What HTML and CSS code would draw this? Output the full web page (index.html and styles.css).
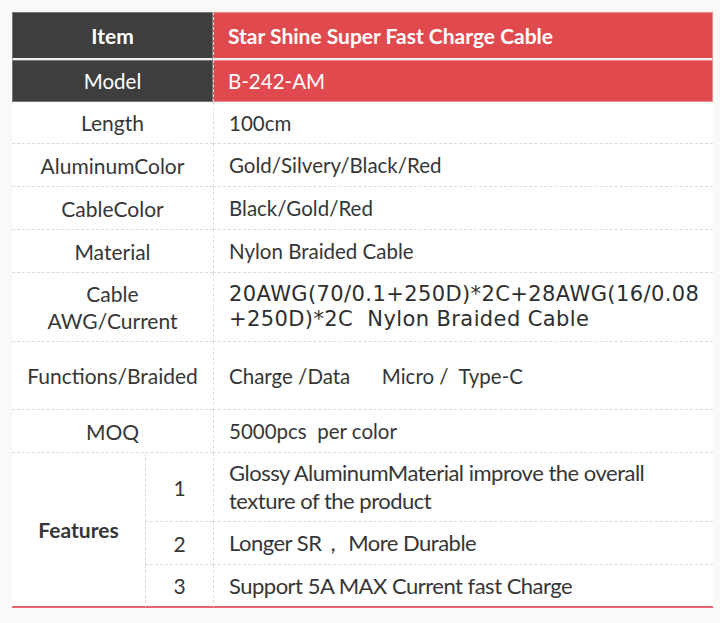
FILE: index.html
```html
<!DOCTYPE html>
<html lang="en">
<head>
<meta charset="utf-8">
<title>Star Shine Super Fast Charge Cable</title>
<link rel="stylesheet" href="styles.css">
</head>
<body>
<div class="spec">
  <div class="cell head-dark r-head bold">Item</div>
  <div class="cell head-red r-head val bold">Star Shine Super Fast Charge Cable</div>

  <div class="cell head-dark r-model">Model</div>
  <div class="cell head-red r-model val">B-242-AM</div>

  <div class="cell label r-42">Length</div>
  <div class="cell val r-42">100cm</div>

  <div class="cell label r-43">AluminumColor</div>
  <div class="cell val r-43">Gold/Silvery/Black/Red</div>

  <div class="cell label r-43">CableColor</div>
  <div class="cell val r-43">Black/Gold/Red</div>

  <div class="cell label r-43">Material</div>
  <div class="cell val r-43">Nylon Braided Cable</div>

  <div class="cell label r-69 two-line">Cable<br>AWG/Current</div>
  <div class="cell val r-69 awg">20AWG(70/0.1+250D)*2C+28AWG(16/0.08<br>+250D)*2C&nbsp; Nylon&nbsp;Braided&nbsp;Cable</div>

  <div class="cell label r-68">Functions/Braided</div>
  <div class="cell val r-68">Charge /Data&nbsp;&nbsp;&nbsp;&nbsp;&nbsp; Micro /&nbsp; Type-C</div>

  <div class="cell label r-43">MOQ</div>
  <div class="cell val r-43">5000pcs&nbsp; per color</div>

  <div class="cell feat-title bold">Features</div>
  <div class="cell num r-69">1</div>
  <div class="cell val r-69 feat">Glossy AluminumMaterial improve the overall<br>texture of the product</div>
  <div class="cell num r-43">2</div>
  <div class="cell val r-43 feat">Longer SR，&nbsp;More Durable</div>
  <div class="cell num r-last">3</div>
  <div class="cell val r-last feat">Support 5A MAX Current fast Charge</div>
</div>
</body>
</html>
```

FILE: styles.css
```css
html, body {
  margin: 0;
  padding: 0;
  background: #faf9f8;
}

body {
  padding: 12px 7px 0 12px;
  font-family: Lato, "Open Sans", sans-serif;
  color: #363636;
}

.spec {
  display: grid;
  grid-template-columns: 133px 68px 500px;
  width: 701px;
  background: #ffffff;
}

.cell {
  box-sizing: border-box;
  display: flex;
  align-items: center;
  font-size: 20.5px;
  border-bottom: 1px dashed #dcdcdc;
}

.bold { font-weight: 700; }

.head-dark {
  grid-column: 1 / 3;
  justify-content: center;
  background: #3e3e3e;
  color: #ffffff;
  border: 1px solid #777777;
}

.head-red {
  background: #e04a4e;
  color: #ffffff;
  border: 1px solid #ee8a8c;
  border-left: 2px solid #f1eded;
}

.r-head {
  height: 48px;
  border-bottom: 2px solid #f3efef;
  font-size: 21px;
}

.r-model {
  height: 42px;
  border-bottom: 1px solid #777777;
}
.head-red.r-model { border-bottom-color: #ee8a8c; }

.label {
  grid-column: 1 / 3;
  justify-content: center;
  text-align: center;
  font-size: 21px;
}

.val {
  padding-left: 15px;
  border-left: 1px dashed #dcdcdc;
}
.head-red.val { padding-left: 14px; }

.r-42 { height: 42px; }
.r-43 { height: 43px; }
.r-68 { height: 68px; }
.r-69 { height: 69px; }
.r-last {
  height: 43px;
  border-bottom: 2px solid #e8646a;
}

.two-line { line-height: 27px; }

.awg {
  font-family: "DejaVu Sans", sans-serif;
  font-size: 21px;
  line-height: 25px;
  letter-spacing: 0.4px;
  color: #2e2e2e;
}

.feat-title {
  grid-row: span 3;
  justify-content: center;
  font-size: 21px;
  border-bottom: 2px solid #e8646a;
}

.num {
  justify-content: center;
  font-size: 21px;
  border-left: 1px dashed #dcdcdc;
}

.feat {
  font-size: 22px;
  line-height: 28px;
  letter-spacing: -0.5px;
}
```
